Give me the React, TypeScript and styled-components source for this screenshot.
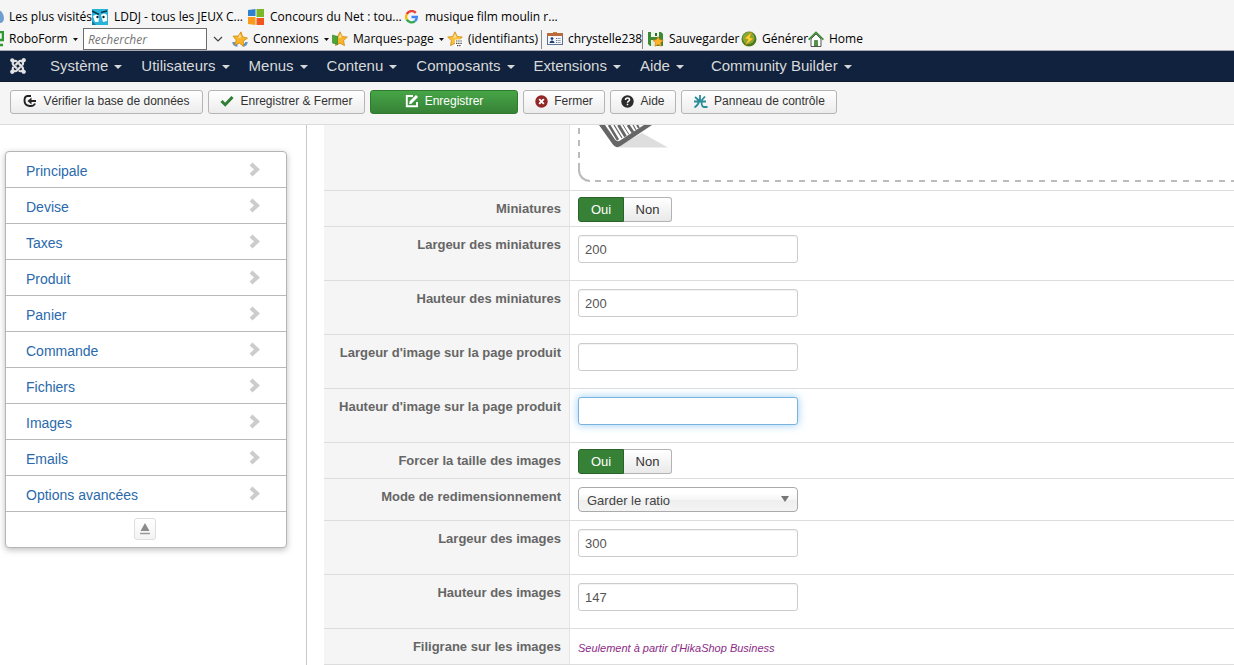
import React from "react";
import styled, { createGlobalStyle } from "styled-components";
import { FaJoomla } from "react-icons/fa";

const GlobalStyle = createGlobalStyle`
  *, *::before, *::after { box-sizing: border-box; }
  html, body { margin: 0; padding: 0; }
  body {
    background: #fff;
    color: #333;
    font-family: "Liberation Sans", Arial, sans-serif;
    font-size: 13px;
    line-height: 18px;
    overflow: hidden;
  }
`;

/* ---------- browser bars ---------- */

const BrowserBars = styled.div`
  background: #f5f5f5;
  border-bottom: 1px solid #a8acb2;
  padding-top: 5px;
  color: #000;
  font-family: "Open Sans", "Noto Sans", sans-serif;
  font-size: 12px;
  line-height: 20px;
`;

const BookmarkRow = styled.div<{ $height: number }>`
  display: flex;
  align-items: center;
  height: ${(p) => p.$height}px;
  white-space: nowrap;
  overflow: hidden;
`;

const Bookmark = styled.button<{ $width: number }>`
  display: flex;
  align-items: center;
  flex: none;
  gap: ${(p) => (p.$width > 130 ? 6 : 5)}px;
  width: ${(p) => p.$width}px;
  padding: 0;
  border: 0;
  background: none;
  color: inherit;
  font: inherit;
  text-align: left;

  svg { flex: none; }
`;

const CutIcon = styled.span`
  display: flex;
  flex: none;
  justify-content: flex-end;
  width: 4px;
  overflow: hidden;
`;

const SearchBox = styled.input`
  flex: none;
  width: 124px;
  height: 22px;
  padding: 0 4px;
  border: 1px solid #6d6d6d;
  background: #fff;
  color: #000;
  font: inherit;

  &::placeholder { color: #757575; font-style: italic; opacity: 1; }
`;

const DropButton = styled.button`
  display: flex;
  flex: none;
  align-items: center;
  justify-content: flex-start;
  width: 25px;
  padding: 0 0 0 6px;
  border: 0;
  background: none;
`;

const Divider = styled.span`
  flex: none;
  width: 1px;
  height: 19px;
  margin-right: 5px;
  background: #8a8a8a;
`;

/* ---------- Joomla bars ---------- */

const NavBar = styled.nav`
  display: flex;
  align-items: center;
  height: 31px;
  padding: 0 9px;
  background: #10223e;
  border-bottom: 1px solid #0c192e;
`;

const Brand = styled.a`
  display: flex;
  width: 41px;
  color: #e2e2e2;
`;

const MenuLink = styled.a<{ $apart?: boolean }>`
  display: flex;
  align-items: center;
  gap: 6px;
  margin-right: 19px;
  margin-left: ${(p) => (p.$apart ? 8 : 0)}px;
  color: #d9d9d9;
  font-size: 15px;
  line-height: 20px;
  text-decoration: none;
  white-space: nowrap;

  &::after {
    content: "";
    margin-top: 2px;
    border-top: 4px solid #d9d9d9;
    border-right: 4px solid transparent;
    border-left: 4px solid transparent;
  }
`;

const Toolbar = styled.div`
  display: flex;
  align-items: center;
  gap: 5px;
  height: 43px;
  padding: 0 10px 3px;
  background: #f5f5f5;
  border-bottom: 1px solid #dcdcdc;
`;

const ToolButton = styled.button<{ $width: number; $primary?: boolean }>`
  display: flex;
  align-items: center;
  justify-content: center;
  gap: 6px;
  width: ${(p) => p.$width}px;
  height: 24px;
  padding: 0 0 1px;
  border: 1px solid ${(p) => (p.$primary ? "#2f7a2f" : "#b5b5b5")};
  border-radius: 3px;
  background: ${(p) =>
    p.$primary ? "linear-gradient(#46a546, #378137)" : "linear-gradient(#ffffff, #ececec)"};
  color: ${(p) => (p.$primary ? "#fff" : "#333")};
  font: 12px/18px "Liberation Sans", Arial, sans-serif;
  white-space: nowrap;
`;

/* ---------- page ---------- */

const Page = styled.div`
  display: flex;
  align-items: stretch;
`;

const SideColumn = styled.aside`
  flex: none;
  width: 307px;
  padding: 26px 19px 0 5px;
  border-right: 1px solid #c8c8c8;
`;

const SideMenu = styled.nav`
  border: 1px solid #b5b5b5;
  border-radius: 4px;
  background: #fff;
  box-shadow: 0 2px 6px rgba(0, 0, 0, 0.25);
`;

const SideLink = styled.a`
  display: flex;
  align-items: center;
  justify-content: space-between;
  height: 36px;
  padding: 3px 25px 0 20px;
  border-bottom: 1px solid #b9b9b9;
  color: #2a69ab;
  font-size: 14px;
  text-decoration: none;

  svg { margin-bottom: 3px; }
`;

const SideFoot = styled.div`
  display: flex;
  align-items: center;
  justify-content: center;
  height: 35px;
  padding: 0 2px 2px 0;
`;

const TopButton = styled.button`
  display: flex;
  align-items: center;
  justify-content: center;
  width: 22px;
  height: 22px;
  padding: 0;
  border: 1px solid #dedede;
  border-radius: 3px;
  background: linear-gradient(#fff, #f3f3f3);
`;

const Main = styled.main`
  flex: 1;
  min-width: 0;
  padding-left: 17px;
`;

const Settings = styled.table`
  width: 100%;
  border-collapse: separate;
  border-spacing: 0;
  border-bottom: 1px solid #ddd;

  tr + tr > * { border-top: 1px solid #ddd; }
`;

const LabelCell = styled.th`
  width: 246px;
  padding: 9px 8px 0 0;
  border-right: 1px solid #e4e4e4;
  background: #f5f5f5;
  color: #666;
  font-weight: bold;
  text-align: right;
  vertical-align: top;
  white-space: nowrap;
`;

const ValueCell = styled.td<{ $height: number; $top?: number }>`
  height: ${(p) => p.$height}px;
  padding: ${(p) => p.$top ?? 8}px 8px 0;
  vertical-align: top;
`;

const DropZone = styled.div`
  position: relative;
  height: 57px;
  margin-right: -8px;
  padding-left: 20px;
  background:
    repeating-linear-gradient(90deg, #bbb 0 6px, transparent 6px 12px) 17px 100% / 100% 2px no-repeat,
    repeating-linear-gradient(transparent 0 3px, #bbb 3px 9px, transparent 9px 12px) 0 0 / 2px 36px no-repeat;

  &::after {
    content: "";
    position: absolute;
    bottom: 0;
    left: 0;
    width: 12px;
    height: 19px;
    border: solid #bbb;
    border-width: 0 0 2px 2px;
    border-radius: 0 0 0 12px;
  }
  svg { display: block; }
`;

const TextField = styled.input<{ $active?: boolean }>`
  display: block;
  width: 220px;
  height: 28px;
  padding: 4px 6px;
  border: 1px solid ${(p) => (p.$active ? "#79b3e0" : "#ccc")};
  border-radius: 3px;
  background: #fff;
  box-shadow: ${(p) =>
    p.$active ? "0 0 8px rgba(82, 168, 236, 0.6)" : "inset 0 1px 1px rgba(0, 0, 0, 0.05)"};
  color: #555;
  font: 13px/18px "Liberation Sans", Arial, sans-serif;
  outline: none;
`;

const Switch = styled.div`
  display: flex;
`;

const SwitchOption = styled.label`
  position: relative;
  display: flex;
  align-items: center;
  justify-content: center;
  width: 48px;
  height: 25px;
  border: 1px solid #b3b3b3;
  border-left: 0;
  border-radius: 0 3px 3px 0;
  background: linear-gradient(#fff, #e9e9e9);
  color: #333;

  &:first-child {
    width: 46px;
    border: 1px solid #2a632a;
    border-radius: 3px 0 0 3px;
  }
  &:has(input:checked) {
    background: #378137;
    color: #fff;
  }
  input {
    position: absolute;
    inset: 0;
    margin: 0;
    opacity: 0;
  }
`;

const SelectWrap = styled.div`
  position: relative;
  width: 220px;

  svg {
    position: absolute;
    top: 9px;
    right: 9px;
    pointer-events: none;
  }
`;

const Select = styled.select`
  display: block;
  appearance: none;
  width: 100%;
  height: 25px;
  padding: 1px 24px 0 8px;
  border: 1px solid #aaa;
  border-radius: 4px;
  background: linear-gradient(#fff 20%, #f6f6f6 50%, #eee 52%, #f4f4f4);
  color: #444;
  font: 13px/23px "Liberation Sans", Arial, sans-serif;
`;

const Note = styled.em`
  display: block;
  color: #8b2a86;
  font: italic 11px/18px "Liberation Sans", Arial, sans-serif;
`;

/* ---------- icons ---------- */

const Arrow = () => (
  <svg width="5" height="3" viewBox="0 0 5 3"><path d="M0 0h5L2.5 3z" fill="#111" /></svg>
);

const STAR = "M8 .8l2.2 4.6 5.1.7-3.7 3.5.9 5L8 12.2l-4.5 2.4.9-5L.7 6.1l5.1-.7z";

const StarKey = () => (
  <svg width="16" height="16" viewBox="0 0 16 16">
    <path d="M1.500 11q0 3 4 3.500M14.500 11q0 3-4 3.500" stroke="#5d93c4" strokeWidth="2.400" fill="none" />
    <path d={STAR} transform="rotate(8 8 8)" fill="#f8b42c" stroke="#d68a12" strokeWidth=".8" />
    <path d="M8 3l1.4 3.2L6 7z" fill="#fde49a" />
  </svg>
);
const StarBook = () => (
  <svg width="16" height="16" viewBox="0 0 16 16">
    <path d={STAR} fill="#f8b42c" stroke="#cf8a16" strokeWidth=".8" />
    <path d="M.5 4l5 1.500v8l-5-1.500z" fill="#4aa832" stroke="#2f7d20" strokeWidth=".6" />
    <path d="M8.500 3l1.4 3.2L6.500 7z" fill="#fde49a" />
  </svg>
);
const StarPad = () => (
  <svg width="16" height="16" viewBox="0 0 16 16">
    <path d={STAR} fill="#fac03a" stroke="#cf8a16" strokeWidth=".8" />
    <path d="M8 3l1.4 3.2L6 7z" fill="#fde49a" />
    <path d="M8 8.500h8V16H8z" fill="#fff" />
    <path d="M9 10h6M9 12.300h6M10 14.600h4" stroke="#444" strokeWidth="1.200" strokeDasharray="1.4 .8" />
  </svg>
);
const CardIcon = () => (
  <svg width="16" height="16" viewBox="0 0 16 16">
    <path d="M6 1h4v3H6z" fill="#c8843e" />
    <rect x=".5" y="2.5" width="15" height="11" fill="#f4f6fa" stroke="#5c7290" />
    <path d="M0 2h16v3H0z" fill="#bb6a3c" />
    <circle cx="5" cy="7.600" r="1.400" fill="#1f3f78" /><path d="M2.500 12c0-3.500 5-3.500 5 0z" fill="#1f3f78" />
    <path d="M9 7.500h5M9 9.500h5M9 11.500h5" stroke="#5c7290" strokeDasharray="1 .7" />
  </svg>
);
const SaveIcon = () => (
  <svg width="16" height="16" viewBox="0 0 16 16">
    <path d="M0 1h13l2 2v12H2l-2-2z" fill="#3c8a34" />
    <path d="M3 1h8v5H3z" fill="#eef5ea" /><path d="M7 2h2v3H7z" fill="#2d6a28" />
    <path d="M3 9h5v6H3z" fill="#dfeedd" />
    <path d={STAR} transform="translate(4.5 5) scale(.7)" fill="#ffb52b" stroke="#e07d12" />
  </svg>
);
const BoltIcon = () => (
  <svg width="16" height="16" viewBox="0 0 16 16">
    <circle cx="8" cy="8" r="7.500" fill="#4f7a1c" /><circle cx="7.500" cy="7" r="6" fill="#86a83a" />
    <path d="M11 .8L3.500 7.500l3.700 1L4 14.500l8.500-7-3.700-1z" fill="#ffd52e" stroke="#b58a10" strokeWidth=".6" />
  </svg>
);
const HomeIcon = () => (
  <svg width="16" height="16" viewBox="0 0 16 16">
    <path d="M3 8v7.500h10V8L8 3z" fill="#fdfdfd" stroke="#555" />
    <path d="M.6 8.600L8 1.400l7.400 7.200" fill="none" stroke="#3f8f35" strokeWidth="1.800" />
    <path d="M6.500 9.500h3V15h-3z" fill="#4c9a3c" stroke="#2d5f28" strokeWidth=".6" />
  </svg>
);
const FaceIcon = () => (
  <svg width="16" height="16" viewBox="0 0 16 16">
    <path d="M0 0h16v16H0z" fill="#27b4d8" />
    <path d="M1 7q4-3 6 0l-.5 6H3z" fill="#fff" /><path d="M9 6q3-3 6 0v6l-4 1z" fill="#fff" />
    <path d="M0 2l7 3.500M9 3.500L15 2" stroke="#0e3a52" strokeWidth="1.600" />
    <circle cx="5.500" cy="8" r="1.200" fill="#123" /><circle cx="11.500" cy="8" r="1.200" fill="#123" />
    <path d="M0 12l4 4H0z" fill="#167aa0" />
  </svg>
);
const TilesIcon = () => (
  <svg width="16" height="16" viewBox="0 0 16 16">
    <path d="M0 1l7.500-1v7H0z" fill="#2f80d0" /><path d="M8.500 0H16v8H8.500z" fill="#7ab828" />
    <path d="M0 8h7.500v8L0 15z" fill="#fb9a1c" /><path d="M8.500 9H16v7H8.500z" fill="#f0561d" />
  </svg>
);
const GoogleIcon = () => (
  <svg width="14" height="14" viewBox="2 2 13 12" fill="none" strokeWidth="2.200">
    <path d="M12 4.200A5 5 0 0 0 3.700 5.500" stroke="#ea4335" />
    <path d="M3.700 5.500a5 5 0 0 0 0 5" stroke="#fbbc05" />
    <path d="M3.700 10.500a5 5 0 0 0 7.600 1.300" stroke="#34a853" />
    <path d="M11.300 11.800A5 5 0 0 0 13 8H8" stroke="#4285f4" />
  </svg>
);
const RefreshIcon = () => (
  <svg width="14" height="14" viewBox="0 0 14 14" fill="none" stroke="#222">
    <path d="M8 2H4.500Q1.500 2.300 1.500 6.500q0 5 5 5.500h1.500q3 0 4-2.500" strokeWidth="1.900" />
    <path d="M13 7H7" strokeWidth="2" /><path d="M8.500 3.500v7L4.500 7z" fill="#222" stroke="none" />
  </svg>
);
const CheckIcon = () => (
  <svg width="14" height="12" viewBox="0 0 14 12"><path d="M1.500 6l3.700 3.700L12.500 2" fill="none" stroke="#2f7d32" strokeWidth="3" /></svg>
);
const EditIcon = () => (
  <svg width="14" height="14" viewBox="0 0 14 14" fill="none" stroke="#fff">
    <path d="M8 2H1.800v10.200H12V8" strokeWidth="1.900" />
    <path d="M5.500 8.500L12 2" strokeWidth="3" /><path d="M4 10.200l.8-3 2.200 2.200z" fill="#fff" stroke="none" />
  </svg>
);
const CloseIcon = () => (
  <svg width="13" height="13" viewBox="0 0 13 13">
    <circle cx="6.500" cy="6.500" r="6.200" fill="#932727" />
    <path d="M4.200 4.200l4.600 4.600M8.800 4.200L4.200 8.800" stroke="#fff" strokeWidth="1.900" />
  </svg>
);
const HelpIcon = () => (
  <svg width="13" height="13" viewBox="0 0 13 13">
    <circle cx="6.500" cy="6.500" r="6.200" fill="#2b2b2b" />
    <path d="M4.500 5q0-2 2-2t2 1.700q0 1-1 1.500T6.500 7.800M6.500 8.800v1.500" fill="none" stroke="#fff" strokeWidth="1.500" />
  </svg>
);
const HikaIcon = () => (
  <svg width="15" height="16" viewBox="0 0 15 16" fill="none" stroke="#2b8c99" strokeWidth="1.800">
    <path d="M7 2v6M2 4l4 3.500M12 3.500L8.500 7.500M1 8.500h12M6 8.500Q5 12.500 1.500 14.500M8.500 8.500q0 5.500 2.500 5.500h3.500" />
  </svg>
);
const Chevron = () => (
  <svg width="12" height="15" viewBox="0 0 12 15"><path d="M2 2l6 5.500L2 13" fill="none" stroke="#ccc" strokeWidth="4" /></svg>
);

const TagPicture = () => (
  <svg width="72" height="24" viewBox="0 0 72 24" aria-label="Image produit">
    <path d="M18 22.500L44 8l26 14.500z" fill="#dedede" />
    <path d="M1 0l13.500 19q3 5 8 2L54 0z" fill="#666" />
    <path d="M7 0l10 14.500q2 3 5 1L46 0z" fill="#fff" />
    <g stroke="#666">
      <path d="M11 0l9 15" strokeWidth="2.500" /><path d="M16 0l8 13" strokeWidth="1.200" />
      <path d="M20.500 0l7 11.500" strokeWidth="3" /><path d="M25 0l6 9.500" strokeWidth="1" />
      <path d="M30 0l5 7.500" strokeWidth="3" /><path d="M35 0l3 5" strokeWidth="1.200" /><path d="M39 0l2 3" strokeWidth="2" />
    </g>
  </svg>
);

/* ---------- content ---------- */

const MENUS = ["Système", "Utilisateurs", "Menus", "Contenu", "Composants", "Extensions", "Aide", "Community Builder"];
const SECTIONS = ["Principale", "Devise", "Taxes", "Produit", "Panier", "Commande", "Fichiers", "Images", "Emails", "Options avancées"];

const TextRow = ({ id, label, value = "", active }: { id: string; label: string; value?: string; active?: boolean }) => (
  <tr>
    <LabelCell scope="row"><label htmlFor={id}>{label}</label></LabelCell>
    <ValueCell $height={54}><TextField id={id} defaultValue={value} $active={active} /></ValueCell>
  </tr>
);

const SwitchRow = ({ name, label }: { name: string; label: string }) => (
  <tr>
    <LabelCell scope="row" id={name}>{label}</LabelCell>
    <ValueCell $height={36} $top={6}>
      <Switch role="radiogroup" aria-labelledby={name}>
        <SwitchOption><input type="radio" name={name} defaultChecked />Oui</SwitchOption>
        <SwitchOption><input type="radio" name={name} />Non</SwitchOption>
      </Switch>
    </ValueCell>
  </tr>
);

export default function App() {
  return (
    <>
      <GlobalStyle />
      <BrowserBars>
        <BookmarkRow $height={23}>
          <Bookmark $width={92}>
            <CutIcon><svg width="8" height="16" viewBox="0 0 8 16"><path d="M0 2h5q3 3 3 7t-3 5H0z" fill="#6f9fcf" /></svg></CutIcon>
            Les plus visités
          </Bookmark>
          <Bookmark $width={156}><FaceIcon />LDDJ - tous les JEUX C...</Bookmark>
          <Bookmark $width={157}><TilesIcon />Concours du Net : tou...</Bookmark>
          <Bookmark $width={156}><GoogleIcon />musique film moulin r...</Bookmark>
        </BookmarkRow>
        <BookmarkRow $height={22}>
          <Bookmark $width={83}>
            <CutIcon><svg width="8" height="16" viewBox="0 0 8 16"><path d="M0 1h7v8H0M0 14h7" fill="none" stroke="#2f9a2f" strokeWidth="2.500" /></svg></CutIcon>
            RoboForm<Arrow />
          </Bookmark>
          <SearchBox type="text" placeholder="Rechercher" aria-label="Rechercher" />
          <DropButton aria-label="Historique">
            <svg width="10" height="6" viewBox="0 0 10 6"><path d="M1 1l4 4 4-4" fill="none" stroke="#444" strokeWidth="1.200" /></svg>
          </DropButton>
          <Bookmark $width={100}><StarKey />Connexions<Arrow /></Bookmark>
          <Bookmark $width={115}><StarBook />Marques-page<Arrow /></Bookmark>
          <Bookmark $width={94}><StarPad />(identifiants)</Bookmark>
          <Divider />
          <Bookmark $width={95}><CardIcon />chrystelle238</Bookmark>
          <Divider />
          <Bookmark $width={93}><SaveIcon />Sauvegarder</Bookmark>
          <Bookmark $width={67}><BoltIcon />Générer</Bookmark>
          <Bookmark $width={60}><HomeIcon />Home</Bookmark>
        </BookmarkRow>
      </BrowserBars>

      <NavBar>
        <Brand href="#" aria-label="Joomla"><FaJoomla size={18} /></Brand>
        {MENUS.map((m) => (
          <MenuLink key={m} href="#" $apart={m === "Community Builder"}>{m}</MenuLink>
        ))}
      </NavBar>

      <Toolbar>
        <ToolButton $width={193}><RefreshIcon />Vérifier la base de données</ToolButton>
        <ToolButton $width={157}><CheckIcon />Enregistrer &amp; Fermer</ToolButton>
        <ToolButton $width={148} $primary><EditIcon />Enregistrer</ToolButton>
        <ToolButton $width={82}><CloseIcon />Fermer</ToolButton>
        <ToolButton $width={66}><HelpIcon />Aide</ToolButton>
        <ToolButton $width={156}><HikaIcon />Panneau de contrôle</ToolButton>
      </Toolbar>

      <Page>
        <SideColumn>
          <SideMenu>
            {SECTIONS.map((s) => (
              <SideLink key={s} href="#">{s}<Chevron /></SideLink>
            ))}
            <SideFoot>
              <TopButton aria-label="Haut de page">
                <svg width="12" height="12" viewBox="0 0 12 12"><path d="M6 0l4.500 8h-9z" fill="#8a8a8a" /><path d="M1 10.500h10" stroke="#999" strokeWidth="1.500" /></svg>
              </TopButton>
            </SideFoot>
          </SideMenu>
        </SideColumn>
        <Main>
          <Settings>
            <tbody>
              <tr>
                <LabelCell scope="row" aria-label="Image" />
                <ValueCell $height={65} $top={0}><DropZone><TagPicture /></DropZone></ValueCell>
              </tr>
              <SwitchRow name="miniatures" label="Miniatures" />
              <TextRow id="thumb-w" label="Largeur des miniatures" value="200" />
              <TextRow id="thumb-h" label="Hauteur des miniatures" value="200" />
              <TextRow id="page-w" label="Largeur d'image sur la page produit" />
              <TextRow id="page-h" label="Hauteur d'image sur la page produit" active />
              <SwitchRow name="force" label="Forcer la taille des images" />
              <tr>
                <LabelCell scope="row"><label htmlFor="mode">Mode de redimensionnement</label></LabelCell>
                <ValueCell $height={42}>
                  <SelectWrap>
                    <Select id="mode"><option>Garder le ratio</option></Select>
                    <svg width="8" height="6" viewBox="0 0 8 6"><path d="M0 0h8L4 6z" fill="#777" /></svg>
                  </SelectWrap>
                </ValueCell>
              </tr>
              <TextRow id="img-w" label="Largeur des images" value="300" />
              <TextRow id="img-h" label="Hauteur des images" value="147" />
              <tr>
                <LabelCell scope="row">Filigrane sur les images</LabelCell>
                <ValueCell $height={36} $top={10}><Note>Seulement à partir d'HikaShop Business</Note></ValueCell>
              </tr>
            </tbody>
          </Settings>
        </Main>
      </Page>
    </>
  );
}
